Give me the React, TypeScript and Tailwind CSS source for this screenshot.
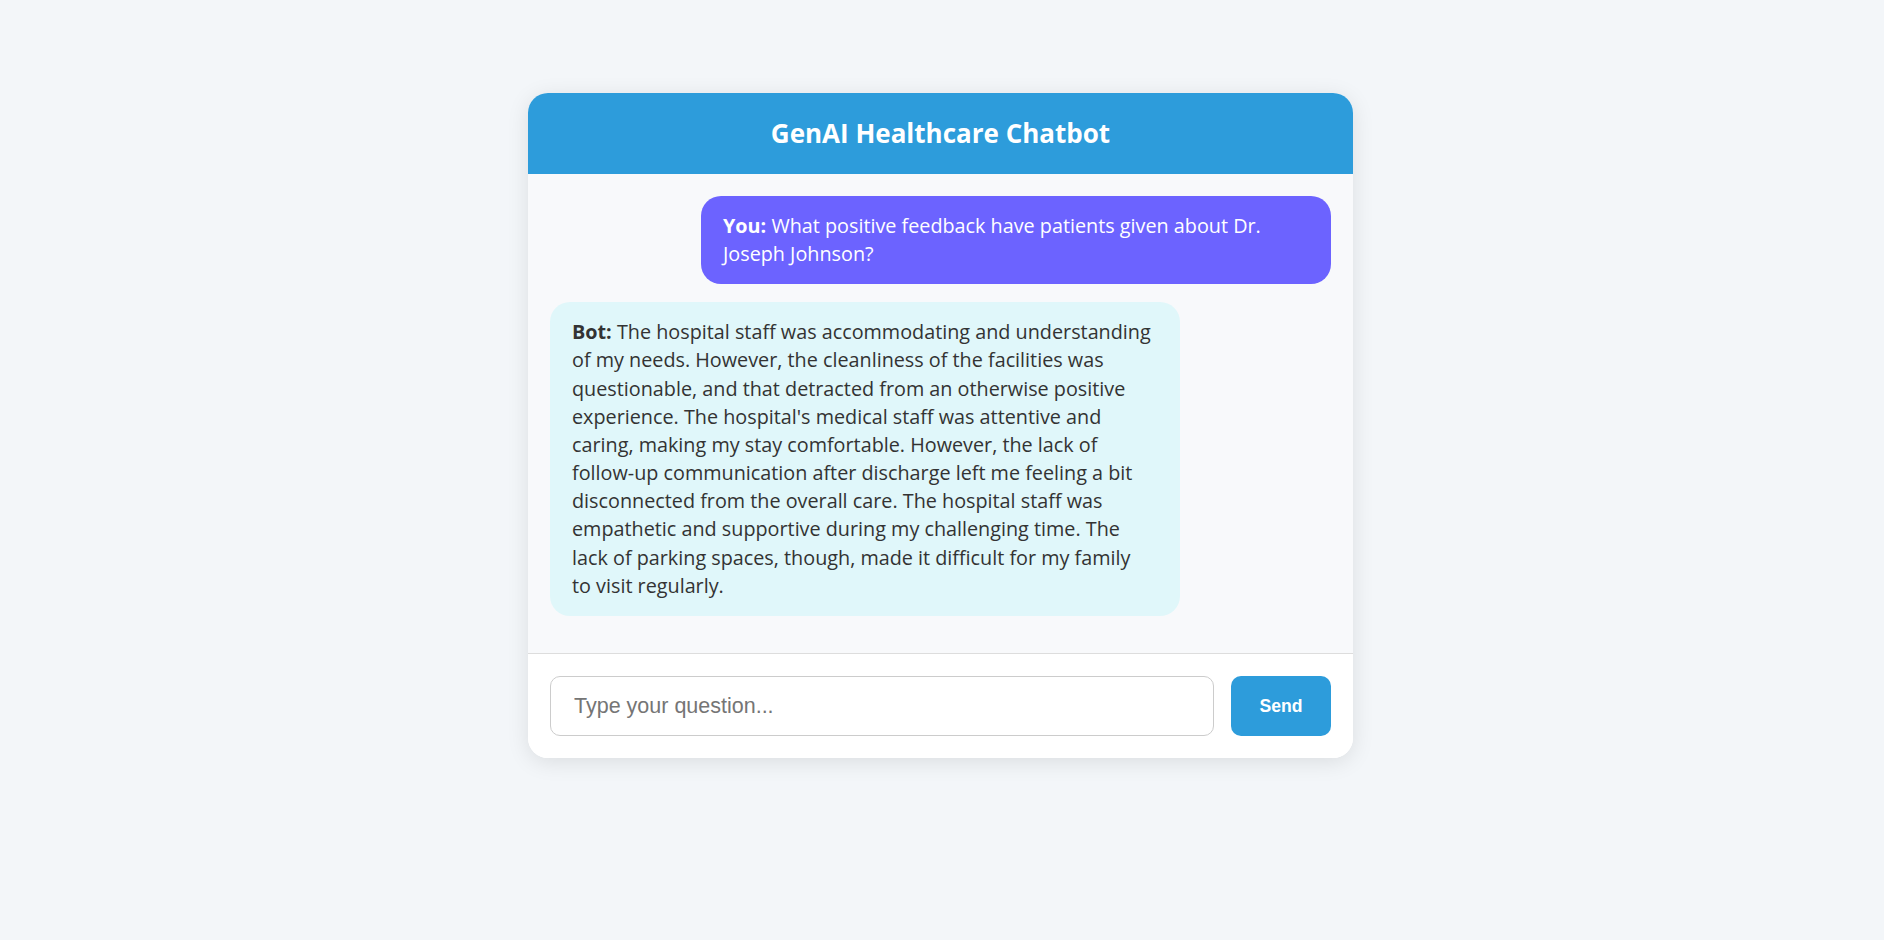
import { useState } from 'react';

const botText =
  "The hospital staff was accommodating and understanding of my needs. However, the cleanliness of the facilities was questionable, and that detracted from an otherwise positive experience. The hospital's medical staff was attentive and caring, making my stay comfortable. However, the lack of follow-up communication after discharge left me feeling a bit disconnected from the overall care. The hospital staff was empathetic and supportive during my challenging time. The lack of parking spaces, though, made it difficult for my family to visit regularly.";

export default function App() {
  const [question, setQuestion] = useState('');

  const messages = [
    { from: 'You', text: 'What positive feedback have patients given about Dr. Joseph Johnson?' },
    { from: 'Bot', text: botText },
  ];

  return (
    <div className="min-h-[940px] bg-[#f3f6f9] pt-[93px] pr-[3px] font-['Open_Sans','Noto_Sans',sans-serif]">
      <div className="mx-auto w-[825px] overflow-hidden rounded-[20px] bg-white shadow-[0_4px_22px_rgba(0,0,0,0.1)]">
        <div className="flex h-[81px] items-center justify-center bg-[#2d9cdb]">
          <h1 className="text-[26px] font-bold text-white">GenAI Healthcare Chatbot</h1>
        </div>

        <div className="flex h-[479px] flex-col gap-[18px] overflow-y-auto bg-[#f8f9fb] p-[22px]">
          {messages.map((m, i) =>
            m.from === 'You' ? (
              <div
                key={i}
                className="max-w-[630px] self-end rounded-[20px] bg-[#6c63ff] py-[16px] pl-[22px] pr-[26px] text-[19.8px] leading-[28.16px] text-white"
              >
                <b>You:</b> {m.text}
              </div>
            ) : (
              <div
                key={i}
                className="w-[630px] self-start rounded-[20px] bg-[#e0f7fa] py-[16px] pl-[22px] pr-[26px] text-[19.8px] leading-[28.16px] text-[#333]"
              >
                <b>Bot:</b> {m.text}
              </div>
            )
          )}
        </div>

        <div className="flex gap-[17px] border-t border-[#ddd] bg-white p-[22px]">
          <input
            value={question}
            onChange={(e) => setQuestion(e.target.value)}
            placeholder="Type your question..."
            className="h-[60px] flex-1 rounded-[10px] border border-[#ccc] px-[23px] font-['Liberation_Sans',Arial,sans-serif] text-[21.5px] text-[#333] outline-none placeholder:text-[#757575]"
          />
          <button className="w-[100px] rounded-[10px] bg-[#2d9cdb] font-['Liberation_Sans',Arial,sans-serif] text-[17.6px] font-bold text-white">
            Send
          </button>
        </div>
      </div>
    </div>
  );
}
